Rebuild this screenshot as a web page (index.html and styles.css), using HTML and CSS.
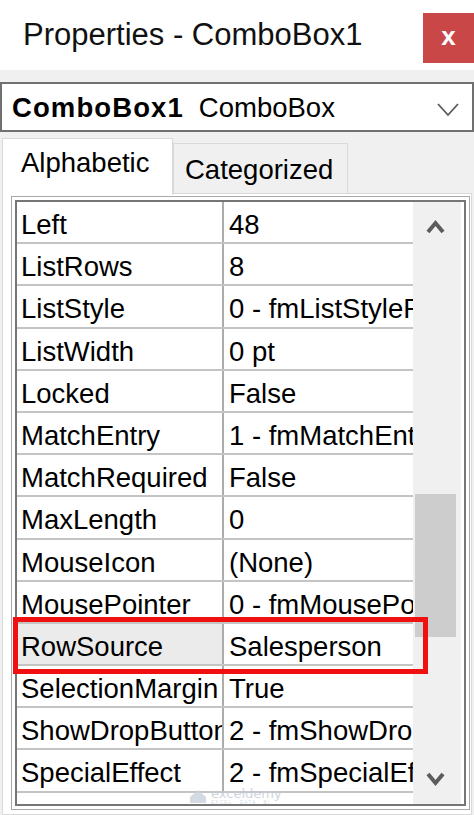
FILE: index.html
```html
<!DOCTYPE html>
<html lang="en">
<head>
  <meta charset="UTF-8"/>
  <title>Properties - ComboBox1</title>
  <link rel="stylesheet" href="styles.css">
</head>
<body>
  <div class="window">
    <div class="titlebar">
      <span class="title">Properties - ComboBox1</span>
      <div class="close">x</div>
    </div>

    <div class="combo">
      <b>ComboBox1</b>
      <span>ComboBox</span>
      <svg class="combo-arrow" width="22" height="15" viewBox="0 0 22 15">
        <polyline points="1,2 11,13 21,2" fill="none" stroke="#5a5a5a" stroke-width="1.8"/>
      </svg>
    </div>

    <div class="tabs">
      <div class="tab active">Alphabetic</div>
      <div class="tab">Categorized</div>
    </div>

    <div class="page">
      <div class="grid">
        <div class="rows">
          <div class="row"><div class="name">Left</div><div class="value">48</div></div>
          <div class="row"><div class="name">ListRows</div><div class="value">8</div></div>
          <div class="row"><div class="name">ListStyle</div><div class="value">0 - fmListStylePlain</div></div>
          <div class="row"><div class="name">ListWidth</div><div class="value">0 pt</div></div>
          <div class="row"><div class="name">Locked</div><div class="value">False</div></div>
          <div class="row"><div class="name">MatchEntry</div><div class="value">1 - fmMatchEntryComplete</div></div>
          <div class="row"><div class="name">MatchRequired</div><div class="value">False</div></div>
          <div class="row"><div class="name">MaxLength</div><div class="value">0</div></div>
          <div class="row"><div class="name">MouseIcon</div><div class="value">(None)</div></div>
          <div class="row"><div class="name">MousePointer</div><div class="value">0 - fmMousePointerDefault</div></div>
          <div class="row selected"><div class="name">RowSource</div><div class="value">Salesperson</div></div>
          <div class="row"><div class="name">SelectionMargin</div><div class="value">True</div></div>
          <div class="row"><div class="name">ShowDropButtonWhen</div><div class="value">2 - fmShowDropButtonWhenAlways</div></div>
          <div class="row"><div class="name">SpecialEffect</div><div class="value">2 - fmSpecialEffectSunken</div></div>
        </div>

        <div class="scrollbar">
          <div class="sb-btn">
            <svg width="21" height="16" viewBox="0 0 21 16">
              <polyline points="3,13 10.5,4 18,13" fill="none" stroke="#5c5c5c" stroke-width="4"/>
            </svg>
          </div>
          <div class="sb-track"><div class="sb-thumb"></div></div>
          <div class="sb-btn">
            <svg width="21" height="16" viewBox="0 0 21 16">
              <polyline points="3,3 10.5,12 18,3" fill="none" stroke="#5c5c5c" stroke-width="4"/>
            </svg>
          </div>
        </div>

        <!-- annotation box around RowSource -->
        <div class="mark"></div>

        <div class="watermark">
          <svg width="20" height="16" viewBox="0 0 20 16">
            <path d="M2 9 L10 2 L18 9 L18 15 L2 15 Z" fill="#c9d2de"/>
          </svg>
          <div class="wm-text">
            <span class="wm-name">exceldemy</span>
            <span class="wm-sub">EXCEL · DATA · BI</span>
          </div>
        </div>
      </div>
    </div>
  </div>
</body>
</html>
```

FILE: styles.css
```css
* {
  box-sizing: border-box;
  margin: 0;
  padding: 0;
}

body {
  width: 474px;
  height: 815px;
  overflow: hidden;
  background: #f0f0f0;
  font-family: 'Liberation Sans', Arial, sans-serif;
  color: #000;
}

.titlebar {
  height: 70px;
  background: #fff;
  display: flex;
  align-items: flex-start;
}

.title {
  padding-left: 23px;
  font-size: 31px;
  line-height: 70px;
  color: #111;
}

.close {
  margin-left: auto;
  margin-top: 13px;
  width: 51px;
  height: 50px;
  background: #c94747;
  color: #fff;
  font-size: 26px;
  font-weight: bold;
  line-height: 46px;
  text-align: center;
}

.combo {
  margin-top: 12px;
  height: 50px;
  border: 2px solid #707070;
  background: #fff;
  display: flex;
  align-items: flex-start;
  gap: 15px;
  padding: 2px 0 0 10px;
  font-size: 27.5px;
  line-height: 44px;
}

.combo b {
  letter-spacing: 1.1px;
}

.combo-arrow {
  margin-left: auto;
  margin-right: 13px;
  margin-top: 16px;
}

.tabs {
  height: 61px;
  padding-left: 2px;
  display: flex;
  align-items: flex-end;
  font-size: 27.5px;
  line-height: 30px;
}

.tab {
  height: 50px;
  width: 175px;
  padding: 11px 0 0 11px;
  border: 1px solid #d9d9d9;
  border-bottom: none;
  background: #f0f0f0;
}

.tab.active {
  position: relative;
  z-index: 1;
  width: 171px;
  height: 57px;
  margin-bottom: -2px;
  padding: 9px 0 0 18px;
  background: #fff;
}

.page {
  height: 622px;
  margin: 0 2px 0 2px;
  border: 1px solid #d9d9d9;
  background: #fff;
  padding: 2px 0 0 8px;
}

.grid {
  position: relative;
  width: 459px;
  height: 614px;
  border: 1px solid #a9a9a9;
  padding: 3px;
}

.grid::before {
  content: "";
  position: absolute;
  inset: 3px;
  border: 2px solid #767676;
  pointer-events: none;
}

.grid {
  display: flex;
}

.rows {
  margin: 2px 0 2px 2px;
  width: 396px;
}

.row {
  display: flex;
  height: 42.2px;
  border-bottom: 2px solid #c4c4c4;
  font-size: 27.5px;
  line-height: 34px;
}

.name,
.value {
  white-space: nowrap;
  overflow: hidden;
  padding-top: 6px;
}

.name {
  width: 207px;
  padding-left: 4px;
  border-right: 2px solid #acacac;
}

.value {
  flex: 1;
  padding-left: 5px;
}

.row.selected .name {
  background: #ebebeb;
}

.scrollbar {
  margin: 2px 2px 2px 0;
  width: 48px;
  background: #f0f0f0;
  display: flex;
  flex-direction: column;
}

.sb-btn {
  height: 50px;
  display: flex;
  align-items: center;
  padding-left: 12px;
}

.sb-track {
  flex: 1;
  padding: 242px 0 0 2px;
}

.sb-thumb {
  width: 41px;
  height: 143px;
  background: #cdcdcd;
}

.mark {
  position: absolute;
  left: 1px;
  top: 420px;
  width: 415px;
  height: 57px;
  border: 5px solid #f01010;
}

.watermark {
  position: absolute;
  left: 176px;
  top: 590px;
  display: flex;
  align-items: center;
  gap: 3px;
  opacity: 0.8;
}

.wm-text {
  display: flex;
  flex-direction: column;
  line-height: 1;
}

.wm-name {
  font-family: 'DejaVu Sans', sans-serif;
  font-size: 13px;
  color: #c3ccd8;
}

.wm-sub {
  font-size: 5px;
  color: #ccd3dc;
  letter-spacing: 1px;
}
```
